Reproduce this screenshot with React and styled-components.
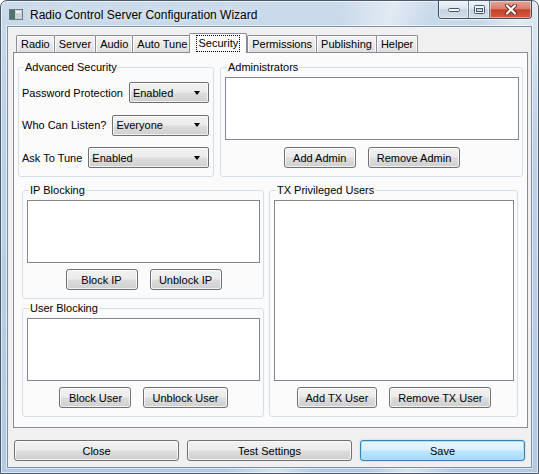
import React from 'react';
import styled, { createGlobalStyle, css } from 'styled-components';

const tabs = ['Radio', 'Server', 'Audio', 'Auto Tune', 'Security', 'Permissions', 'Publishing', 'Helper'];
const activeTab = 'Security';

const securityRows = [
  { label: 'Password Protection', value: 'Enabled' },
  { label: 'Who Can Listen?', value: 'Everyone' },
  { label: 'Ask To Tune', value: 'Enabled' },
];

const GlobalStyle = createGlobalStyle`
  html, body {
    margin: 0;
    padding: 0;
    background: #ffffff;
  }
  body {
    font-family: 'Liberation Sans', Arial, sans-serif;
    font-size: 11px;
    color: #000;
  }
  * {
    box-sizing: border-box;
  }
`;

const Window = styled.div`
  width: 539px;
  height: 474px;
  display: flex;
  flex-direction: column;
  border: 1px solid #4a5a6c;
  border-radius: 7px 7px 0 0;
  overflow: hidden;
  background:
    linear-gradient(104deg, rgba(255,255,255,0) 52%, rgba(255,255,255,.45) 60%, rgba(255,255,255,0) 66%, rgba(255,255,255,0) 74%, rgba(255,255,255,.5) 80%, rgba(255,255,255,0) 87%),
    linear-gradient(180deg, #cbdbeb 0%, #bfd2e6 20%, #b3cae2 100%);
  box-shadow: inset 0 0 0 1px rgba(255,255,255,.6);
`;

const TitleBar = styled.div`
  height: 25px;
  flex: none;
  display: flex;
  align-items: flex-start;
  padding-left: 8px;
`;

const TitleGroup = styled.div`
  display: flex;
  align-items: center;
  gap: 7px;
  height: 25px;
  padding-top: 2px;
`;

const TitleText = styled.span`
  font-size: 12px;
  color: #000;
  text-shadow: 0 0 6px rgba(255,255,255,.9);
`;

const CaptionGroup = styled.div`
  display: flex;
  height: 18px;
  margin-left: auto;
  margin-right: 6px;
  border: 1px solid #3f4d5e;
  border-top: none;
  border-radius: 0 0 4px 4px;
  overflow: hidden;
  box-shadow: 0 1px 0 rgba(255,255,255,.6);
`;

const CaptionButton = styled.div`
  width: ${({ $w }) => $w}px;
  display: flex;
  align-items: center;
  justify-content: center;
  background: ${({ $close }) => ($close
    ? 'linear-gradient(180deg, #e6a295 0%, #d9806f 45%, #c5442c 52%, #d2593f 100%)'
    : 'linear-gradient(180deg, #eef3f8 0%, #dce6f0 45%, #c4d3e3 52%, #d2deea 100%)')};
  box-shadow: inset 0 0 0 1px rgba(255,255,255,.45);

  & + & {
    border-left: 1px solid #6b7b8e;
  }
`;

const Client = styled.div`
  flex: 1;
  margin: 0 6px 5px 6px;
  border: 1px solid #7e90a4;
  background: #f0f0f0;
  padding: 6px 3px 6px 5px;
  display: flex;
  flex-direction: column;
  box-shadow: 0 0 0 1px rgba(255,255,255,.55);
`;

const TabBar = styled.div`
  height: 20px;
  flex: none;
  display: flex;
  align-items: flex-end;
  padding-left: 3px;
  margin-bottom: -1px;
  position: relative;
  z-index: 1;
`;

const Tab = styled.div`
  position: relative;
  height: 17px;
  margin-bottom: 1px;
  margin-right: -1px;
  padding: 0 4px;
  display: flex;
  align-items: center;
  border: 1px solid #898c95;
  border-bottom: none;
  border-radius: 2px 2px 0 0;
  background: linear-gradient(180deg, #f4f4f4 0%, #ebebeb 50%, #dedede 100%);
  box-shadow: inset 1px 1px 0 #fff, inset -1px 0 0 #fbfbfb;
  white-space: nowrap;

  ${({ $active }) => $active && css`
    height: 20px;
    margin: 0 -1px 0 -2px;
    padding: 0 6px;
    z-index: 2;
    background: linear-gradient(180deg, #ffffff 0%, #fbfbfb 100%);
    box-shadow: none;
    & + * {
      margin-left: 1px;
    }
  `}
`;

const FocusText = styled.span`
  border: 1px dotted #000;
  padding: 1px 1px;
  line-height: 13px;
`;

const Pane = styled.div`
  flex: 1;
  display: flex;
  flex-direction: column;
  gap: 7px;
  border: 1px solid #898c95;
  background: #fbfbfb;
  padding: 8px 4px 10px 4px;
`;

const TopRow = styled.div`
  height: 116px;
  flex: none;
  display: flex;
  gap: 6px;
`;

const BottomRow = styled.div`
  flex: 1;
  display: flex;
  gap: 5px;
  padding: 0 5px 0 4px;
`;

const Column = styled.div`
  width: 242px;
  flex: none;
  display: flex;
  flex-direction: column;
  gap: 3px;
`;

const Group = styled.fieldset`
  margin: 0;
  min-width: 0;
  min-inline-size: 0;
  border: 1px solid #d5dfe5;
  border-radius: 3px;
  padding: ${({ $pad }) => $pad || '3px 3px 8px 4px'};
  display: flex;
  flex-direction: column;
  justify-content: ${({ $spread }) => ($spread ? 'space-between' : 'flex-start')};
  gap: ${({ $gap }) => ($gap === undefined ? 6 : $gap)}px;
  width: ${({ $width }) => ($width ? `${$width}px` : 'auto')};
  flex: ${({ $width }) => ($width ? 'none' : 1)};
`;

const Legend = styled.legend`
  margin-left: 2px;
  padding: 0 1px;
  line-height: 13px;
  color: #000;
`;

const FieldRow = styled.div`
  display: flex;
  align-items: center;
  gap: 6px;
  height: 21px;
`;

const FieldLabel = styled.span`
  white-space: nowrap;
`;

const ComboBox = styled.div`
  flex: 1;
  height: 21px;
  display: flex;
  align-items: center;
  padding: 0 8px 0 3px;
  border: 1px solid #707070;
  border-radius: 2px;
  background: linear-gradient(180deg, #f2f2f2 0%, #ebebeb 48%, #dddddd 52%, #cfcfcf 100%);
  box-shadow: inset 0 0 0 1px rgba(255,255,255,.7);
`;

const ComboText = styled.span`
  flex: 1;
`;

const ComboArrow = styled.span`
  width: 0;
  height: 0;
  border-left: 3.5px solid transparent;
  border-right: 3.5px solid transparent;
  border-top: 4px solid #000;
`;

const ListBox = styled.div`
  flex: 1;
  background: #fff;
  border: 1px solid #828790;
`;

const ButtonRow = styled.div`
  display: flex;
  justify-content: center;
  gap: 12px;
`;

const PushButton = styled.button`
  height: 21px;
  min-width: 72px;
  padding: 0 8px;
  font: inherit;
  color: #000;
  border: 1px solid #707070;
  border-radius: 3px;
  background: linear-gradient(180deg, #f2f2f2 0%, #ebebeb 48%, #dddddd 52%, #cfcfcf 100%);
  box-shadow: inset 0 0 0 1px rgba(255,255,255,.75);
  white-space: nowrap;

  ${({ $default }) => $default && css`
    border-color: #3c7fb1;
    background: linear-gradient(180deg, #eaf6fd 0%, #d9f0fc 48%, #bee6fd 52%, #a7d9f5 100%);
    box-shadow: inset 0 0 0 1px #a9e2f8, 0 0 2px rgba(60,127,177,.35);
  `}
`;

const Footer = styled.div`
  flex: none;
  display: flex;
  gap: 8px;
  margin-top: 12px;
  padding: 0 3px 0 1px;

  & > button {
    flex: 1;
  }
`;

const AppIcon = () => (
  <svg width="14" height="11" viewBox="0 0 14 11">
    <rect x="0.5" y="0.5" width="13" height="10" fill="#c9d1d4" stroke="#6d7a7f" />
    <rect x="1" y="1" width="5" height="9" fill="#4c7467" />
    <rect x="7" y="2" width="5" height="2" fill="#eef2f3" />
  </svg>
);

const MinGlyph = () => (
  <svg width="12" height="5" viewBox="0 0 12 5">
    <rect x="0.5" y="1.5" width="11" height="3" rx="1" fill="#f4f7fa" stroke="#4a5668" />
  </svg>
);

const MaxGlyph = () => (
  <svg width="11" height="9" viewBox="0 0 11 9">
    <rect x="0.5" y="0.5" width="10" height="8" rx="1" fill="#f4f7fa" stroke="#4a5668" />
    <rect x="2.5" y="3.5" width="6" height="3" fill="#c9d6e3" stroke="#4a5668" />
  </svg>
);

const CloseGlyph = () => (
  <svg width="14" height="11" viewBox="0 0 14 11">
    <path d="M3 1.5 L11 9.5 M11 1.5 L3 9.5" stroke="#6b2a1e" strokeWidth="4" strokeLinecap="round" />
    <path d="M3 1.5 L11 9.5 M11 1.5 L3 9.5" stroke="#ffffff" strokeWidth="2.2" strokeLinecap="round" />
  </svg>
);

const GroupBox = ({ title, children, ...rest }) => (
  <Group {...rest}>
    <Legend>{title}</Legend>
    {children}
  </Group>
);

const ListGroup = ({ title, buttons, gap }) => (
  <GroupBox title={title} $gap={gap}>
    <ListBox />
    <ButtonRow>
      {buttons.map((b) => <PushButton key={b} type="button">{b}</PushButton>)}
    </ButtonRow>
  </GroupBox>
);

const App = () => (
  <>
    <GlobalStyle />
    <Window>
      <TitleBar>
        <TitleGroup>
          <AppIcon />
          <TitleText>Radio Control Server Configuration Wizard</TitleText>
        </TitleGroup>
        <CaptionGroup>
          <CaptionButton $w={29}><MinGlyph /></CaptionButton>
          <CaptionButton $w={21}><MaxGlyph /></CaptionButton>
          <CaptionButton $w={42} $close><CloseGlyph /></CaptionButton>
        </CaptionGroup>
      </TitleBar>
      <Client>
        <TabBar>
          {tabs.map((t) => (
            <Tab key={t} $active={t === activeTab}>
              {t === activeTab ? <FocusText>{t}</FocusText> : t}
            </Tab>
          ))}
        </TabBar>
        <Pane>
          <TopRow>
            <GroupBox title="Advanced Security" $width={196} $pad="8px 4px 8px 3px" $spread $gap={0}>
              {securityRows.map((r) => (
                <FieldRow key={r.label}>
                  <FieldLabel>{r.label}</FieldLabel>
                  <ComboBox>
                    <ComboText>{r.value}</ComboText>
                    <ComboArrow />
                  </ComboBox>
                </FieldRow>
              ))}
            </GroupBox>
            <ListGroup title="Administrators" buttons={['Add Admin', 'Remove Admin']} gap={7} />
          </TopRow>
          <BottomRow>
            <Column>
              <ListGroup title="IP Blocking" buttons={['Block IP', 'Unblock IP']} />
              <ListGroup title="User Blocking" buttons={['Block User', 'Unblock User']} />
            </Column>
            <ListGroup title="TX Privileged Users" buttons={['Add TX User', 'Remove TX User']} />
          </BottomRow>
        </Pane>
        <Footer>
          <PushButton type="button">Close</PushButton>
          <PushButton type="button">Test Settings</PushButton>
          <PushButton type="button" $default>Save</PushButton>
        </Footer>
      </Client>
    </Window>
  </>
);

export default App;
